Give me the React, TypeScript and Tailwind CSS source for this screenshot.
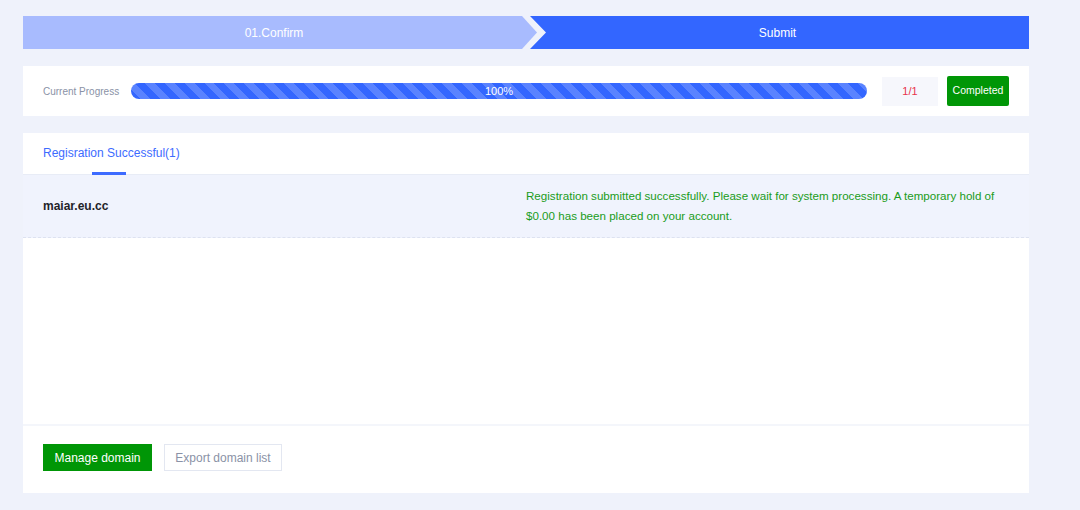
export default function App() {
  return (
    <div className="w-[1080px] h-[510px] bg-[#eff2fb] pl-[23px] pt-[16px] font-['Liberation_Sans',Arial,sans-serif] overflow-hidden">
      <div className="w-[1006px]">
        {/* steps */}
        <div className="flex h-[33px]">
          <div className="w-[514px] bg-[#a8bbfe] text-white text-[12px] flex items-center justify-center [clip-path:polygon(0_0,499px_0,100%_50%,499px_100%,0_100%)]">
            <span className="mr-[12px]">01.Confirm</span>
          </div>
          <div className="flex-1 ml-[-7px] bg-[#3366ff] text-white text-[12px] flex items-center justify-center [clip-path:polygon(0_0,100%_0,100%_100%,0_100%,16px_50%)]">
            <span className="mr-[4px]">Submit</span>
          </div>
        </div>

        {/* progress */}
        <div className="mt-[17px] bg-white h-[50px] flex items-center pl-[20px] pr-[20px]">
          <span className="text-[10px] text-[#8a92a6] w-[88px] shrink-0">Current Progress</span>
          <div className="w-[736px] h-[16px] rounded-full relative flex items-center justify-center bg-[repeating-linear-gradient(45deg,#3366ff_0,#3366ff_7px,#5a83ff_7px,#5a83ff_14px)]">
            <span className="text-[11px] text-white">100%</span>
          </div>
          <div className="ml-[15px] w-[56px] h-[29px] bg-[#f6f7fc] text-[#e8344c] text-[11px] flex items-center justify-center">
            1/1
          </div>
          <button className="ml-[9px] w-[62px] h-[30px] bg-[#009606] text-white text-[10.5px] rounded-[2px] flex items-center justify-center">
            Completed
          </button>
        </div>

        {/* result card */}
        <div className="mt-[17px] bg-white h-[360px] flex flex-col">
          <div className="h-[42px] border-b border-[#e8ecf6] pl-[20px] flex">
            <div className="relative flex items-center text-[12px] text-[#3d6bff] pb-[2px]">
              Regisration Successful(1)
              <span className="absolute left-[49px] bottom-[-1px] w-[34px] h-[3px] bg-[#3d6bff]" />
            </div>
          </div>
          <div className="h-[63px] bg-[#f0f3fd] border-b border-dashed border-[#dde2f0] flex items-center pl-[20px]">
            <div className="w-[483px] text-[12px] font-bold text-[#1f2329]">maiar.eu.cc</div>
            <div className="w-[480px] text-[11.6px] leading-[20px] text-[#1a9c1a]">
              Registration submitted successfully. Please wait for system processing. A temporary hold of $0.00 has been placed on your account.
            </div>
          </div>
          <div className="flex-1" />
          <div className="h-[69px] border-t-[2px] border-[#f4f6fb] flex items-center pl-[20px] gap-[12px] pb-[4px]">
            <button className="w-[109px] h-[27px] bg-[#009606] text-white text-[12px] flex items-center justify-center">
              Manage domain
            </button>
            <button className="w-[118px] h-[27px] bg-white border border-[#e3e7f1] text-[#8a92a6] text-[12px] flex items-center justify-center">
              Export domain list
            </button>
          </div>
        </div>
      </div>
    </div>
  );
}
